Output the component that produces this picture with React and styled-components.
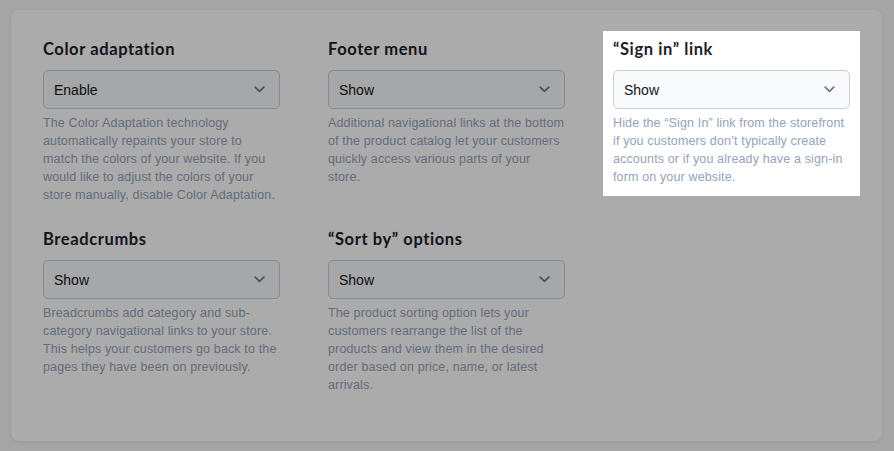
import React from "react"
import styled, { createGlobalStyle } from "styled-components"

const GlobalStyle = createGlobalStyle`
  html, body {
    margin: 0;
    padding: 0;
    background: #f7f7f7;
    font-family: "Liberation Sans", Arial, sans-serif;
  }
`

const Page = styled.div`
  padding: 10px 12px 10px 11px;
  overflow: hidden;
`

const Card = styled.div`
  background: #ffffff;
  border-radius: 8px;
  box-shadow: 0 1px 4px rgba(0, 0, 0, 0.08);
  height: 431px;
  box-sizing: border-box;
  padding: 31px 32px;
`

const Grid = styled.div`
  display: grid;
  grid-template-columns: repeat(3, 237px);
  column-gap: 48px;
  row-gap: 27px;
  align-items: start;
`

const Setting = styled.div`
  position: relative;
  ${({ $spotlight }) =>
    $spotlight &&
    `
    z-index: 1;
    margin: -10px;
    padding: 10px;
    background: #ffffff;
    box-shadow: 0 0 0 3000px rgba(0, 0, 0, 0.33);
  `}
`

const Title = styled.h3`
  margin: 0 0 13px;
  font-family: Lato, "Liberation Sans", sans-serif;
  font-weight: 700;
  font-size: 16.5px;
  line-height: 16px;
  letter-spacing: 0.6px;
  color: #1d2029;
`

const Select = styled.div`
  display: flex;
  align-items: center;
  justify-content: space-between;
  box-sizing: border-box;
  height: 39px;
  padding: 0 14px 0 10px;
  background: #f8fafc;
  border: 1px solid #c6d0dc;
  border-radius: 5px;
  font-size: 14px;
  color: #111418;
`

const Description = styled.p`
  margin: 5px 0 0;
  font-size: 12.5px;
  line-height: 18px;
  letter-spacing: 0.14px;
  color: #94a3b8;
`

const Chevron = () => (
  <svg width="11" height="7" viewBox="0 0 11 7" fill="none">
    <path d="M1.2 1.2 L5.5 5.3 L9.8 1.2" stroke="#6b7a90" strokeWidth="1.8" strokeLinecap="round" strokeLinejoin="round" />
  </svg>
)

const settings = [
  {
    title: "Color adaptation",
    value: "Enable",
    text: "The Color Adaptation technology automatically repaints your store to match the colors of your website. If you would like to adjust the colors of your store manually, disable Color Adaptation.",
  },
  {
    title: "Footer menu",
    value: "Show",
    text: "Additional navigational links at the bottom of the product catalog let your customers quickly access various parts of your store.",
  },
  {
    title: "\u201CSign in\u201D link",
    value: "Show",
    text: "Hide the \u201CSign In\u201D link from the storefront if you customers don\u2019t typically create accounts or if you already have a sign-in form on your website.",
    spotlight: true,
  },
  {
    title: "Breadcrumbs",
    value: "Show",
    text: "Breadcrumbs add category and sub-category navigational links to your store. This helps your customers go back to the pages they have been on previously.",
  },
  {
    title: "\u201CSort by\u201D options",
    value: "Show",
    text: "The product sorting option lets your customers rearrange the list of the products and view them in the desired order based on price, name, or latest arrivals.",
  },
]

export default function App() {
  return (
    <Page>
      <GlobalStyle />
      <Card>
        <Grid>
          {settings.map((s) => (
            <Setting key={s.title} $spotlight={s.spotlight}>
              <Title>{s.title}</Title>
              <Select>
                <span>{s.value}</span>
                <Chevron />
              </Select>
              <Description>{s.text}</Description>
            </Setting>
          ))}
        </Grid>
      </Card>
    </Page>
  )
}
